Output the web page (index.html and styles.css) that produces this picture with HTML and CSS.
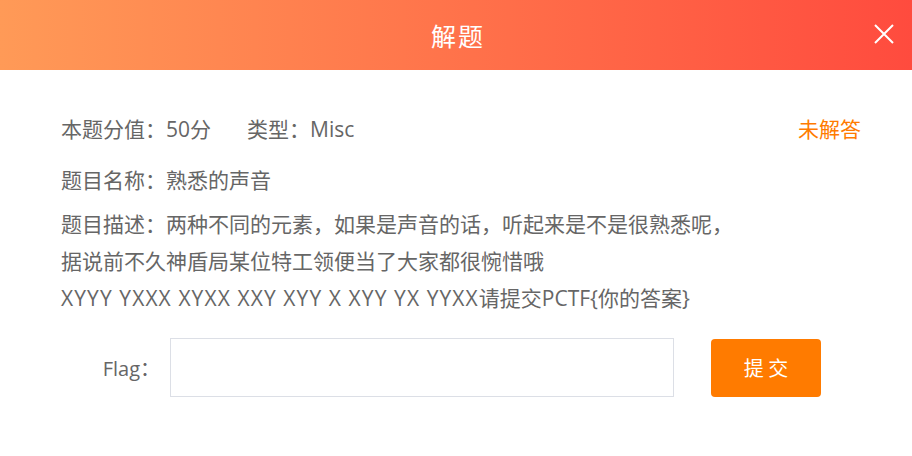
FILE: index.html
```html
<!DOCTYPE html>
<html lang="zh-CN">

<head>
    <meta charset="UTF-8">
    <title>解题</title>
    <link rel="stylesheet" href="styles.css">
</head>

<body>
    <div class="dialog">
        <div class="dialog-header">
            <span class="dialog-title">解题</span>
            <span class="dialog-close">
                <svg width="20" height="20" viewBox="0 0 20 20">
                    <path d="M1 1 L19 19 M19 1 L1 19" stroke="#fff" stroke-width="2" fill="none" />
                </svg>
            </span>
        </div>

        <div class="dialog-body">
            <div class="info-row first">
                <span>本题分值：50分</span>
                <span class="type">类型：Misc</span>
                <span class="state">未解答</span>
            </div>
            <div class="info-row second">题目名称：熟悉的声音</div>
            <div class="desc">
                题目描述：两种不同的元素，如果是声音的话，听起来是不是很熟悉呢，<br>
                据说前不久神盾局某位特工领便当了大家都很惋惜哦<br>
                <span class="code">XYYY YXXX XYXX XXY XYY X XYY YX YYXX</span>请提交PCTF{你的答案}
            </div>

            <div class="flag-row">
                <label class="flag-label">Flag：</label>
                <input class="flag-input" type="text">
                <button class="submit-btn">提 交</button>
            </div>
        </div>
    </div>
</body>

</html>
```

FILE: styles.css
```css
body {
    margin: 0;
    background-color: #fff;
    font-family: "Open Sans", "Noto Sans CJK SC", sans-serif;
}

.dialog {
    width: 912px;
    height: 456px;
    background-color: #fff;
}

.dialog-header {
    height: 70px;
    display: flex;
    align-items: center;
    justify-content: center;
    position: relative;
    background: linear-gradient(to right, #ff9a57, #ff4b3e);
}

.dialog-title {
    color: #fff;
    font-size: 25px;
    letter-spacing: 2px;
    margin-left: 4px;
}

.dialog-close {
    position: absolute;
    right: 18px;
    top: 24px;
    width: 20px;
    height: 20px;
}

.dialog-body {
    padding: 41px 51px 0 61px;
    color: #666;
    font-size: 21px;
}

.info-row {
    line-height: 37px;
    display: flex;
}

.info-row.first {
    margin-bottom: 14px;
}

.info-row.second {
    margin-bottom: 7px;
}

.type {
    margin-left: 36px;
}

.state {
    margin-left: auto;
    color: #ff7b00;
}

.desc {
    line-height: 37px;
}

.code {
    letter-spacing: 1.1px;
}

.flag-row {
    display: flex;
    align-items: center;
    margin-top: 21px;
}

.flag-label {
    width: 99px;
    text-align: right;
    margin-right: 10px;
    font-size: 20px;
}

.flag-input {
    width: 504px;
    height: 59px;
    box-sizing: border-box;
    border: 1px solid #dcdfe6;
    outline: none;
    font-size: 18px;
}

.submit-btn {
    margin-left: 37px;
    width: 110px;
    height: 58px;
    border: none;
    border-radius: 4px;
    background-color: #ff7b00;
    color: #fff;
    font-family: "Noto Sans CJK SC", sans-serif;
    font-size: 20px;
}
```
